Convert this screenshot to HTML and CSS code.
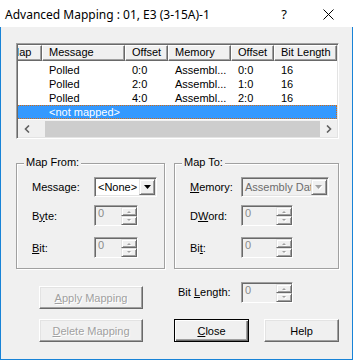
FILE: index.html
```html
<!DOCTYPE html>
<html>
<head>
<meta charset="utf-8">
<link rel="stylesheet" href="styles.css">
</head>
<body>
<div class="window">
  <div class="titlebar">
    <span class="title">Advanced Mapping : 01, E3 (3-15A)-1</span>
    <span class="tb-help">?</span>
    <span class="tb-close"><svg width="11" height="11" viewBox="0 0 11 11"><path d="M0.5 0.5L10.5 10.5M10.5 0.5L0.5 10.5" stroke="#000" stroke-width="1" fill="none"/></svg></span>
  </div>
  <div class="body">
    <div class="list">
      <div class="view">
        <div class="content">
          <div class="hdr">
            <div class="hc c-map">Map</div>
            <div class="hc c-msg">Message</div>
            <div class="hc c-off">Offset</div>
            <div class="hc c-mem">Memory</div>
            <div class="hc c-off2">Offset</div>
            <div class="hc c-bit">Bit Length</div>
          </div>
          <div class="row"><div class="cell c-map"></div><div class="cell c-msg">Polled</div><div class="cell c-off">0:0</div><div class="cell c-mem">Assembl...</div><div class="cell c-off2">0:0</div><div class="cell c-bit">16</div></div>
          <div class="row"><div class="cell c-map"></div><div class="cell c-msg">Polled</div><div class="cell c-off">2:0</div><div class="cell c-mem">Assembl...</div><div class="cell c-off2">1:0</div><div class="cell c-bit">16</div></div>
          <div class="row"><div class="cell c-map"></div><div class="cell c-msg">Polled</div><div class="cell c-off">4:0</div><div class="cell c-mem">Assembl...</div><div class="cell c-off2">2:0</div><div class="cell c-bit">16</div></div>
          <div class="row sel"><div class="cell c-map"></div><div class="cell c-msg">&lt;not mapped&gt;</div><div class="cell c-off"></div><div class="cell c-mem"></div><div class="cell c-off2"></div><div class="cell c-bit"></div></div>
        </div>
      </div>
      <div class="hscroll">
        <div class="sb-btn"><svg width="6" height="8" viewBox="0 0 6 8"><path d="M5 0.5L1.5 4L5 7.5" stroke="#606060" stroke-width="1.6" fill="none"/></svg></div>
        <div class="sb-track"><div class="sb-thumb"></div></div>
        <div class="sb-btn"><svg width="6" height="8" viewBox="0 0 6 8"><path d="M1 0.5L4.5 4L1 7.5" stroke="#606060" stroke-width="1.6" fill="none"/></svg></div>
      </div>
    </div>

    <div class="groups">
      <div class="group group-from">
        <span class="legend">Map From:</span>
        <div class="field">
          <span class="lbl lbl-from">Message:</span>
          <div class="combo combo-from">
            <span class="combo-text">&lt;None&gt;</span>
            <span class="combo-btn"><svg width="7" height="4" viewBox="0 0 7 4"><path d="M0 0H7L3.5 4Z" fill="#000"/></svg></span>
          </div>
        </div>
        <div class="field f2">
          <span class="lbl lbl-from">B<u>y</u>te:</span>
          <div class="spin spin-from">
            <span class="spin-edit">0</span>
            <span class="spin-btns">
              <span class="sbtn"><svg width="6" height="4" viewBox="0 0 6 4"><path d="M1 3L3 1L5 3Z" fill="#fff" transform="translate(1,1)"/><path d="M1 3L3 1L5 3Z" fill="#a0a0a0"/></svg></span>
              <span class="sbtn"><svg width="6" height="4" viewBox="0 0 6 4"><path d="M1 0L5 0L3 2Z" fill="#fff" transform="translate(1,1)"/><path d="M1 0L5 0L3 2Z" fill="#a0a0a0"/></svg></span>
            </span>
          </div>
        </div>
        <div class="field f3">
          <span class="lbl lbl-from"><u>B</u>it:</span>
          <div class="spin spin-from">
            <span class="spin-edit">0</span>
            <span class="spin-btns">
              <span class="sbtn"><svg width="6" height="4" viewBox="0 0 6 4"><path d="M1 3L3 1L5 3Z" fill="#fff" transform="translate(1,1)"/><path d="M1 3L3 1L5 3Z" fill="#a0a0a0"/></svg></span>
              <span class="sbtn"><svg width="6" height="4" viewBox="0 0 6 4"><path d="M1 0L5 0L3 2Z" fill="#fff" transform="translate(1,1)"/><path d="M1 0L5 0L3 2Z" fill="#a0a0a0"/></svg></span>
            </span>
          </div>
        </div>
      </div>

      <div class="group group-to">
        <span class="legend">Map To:</span>
        <div class="field">
          <span class="lbl lbl-to"><u>M</u>emory:</span>
          <div class="combo combo-to disabled">
            <span class="combo-text">Assembly Data</span>
            <span class="combo-btn"><svg width="8" height="5" viewBox="0 0 8 5"><path d="M1 1H8L4.5 5Z" fill="#fff"/><path d="M0 0H7L3.5 4Z" fill="#a0a0a0"/></svg></span>
          </div>
        </div>
        <div class="field f2">
          <span class="lbl lbl-to">D<u>W</u>ord:</span>
          <div class="spin spin-to">
            <span class="spin-edit">0</span>
            <span class="spin-btns">
              <span class="sbtn"><svg width="6" height="4" viewBox="0 0 6 4"><path d="M1 3L3 1L5 3Z" fill="#fff" transform="translate(1,1)"/><path d="M1 3L3 1L5 3Z" fill="#a0a0a0"/></svg></span>
              <span class="sbtn"><svg width="6" height="4" viewBox="0 0 6 4"><path d="M1 0L5 0L3 2Z" fill="#fff" transform="translate(1,1)"/><path d="M1 0L5 0L3 2Z" fill="#a0a0a0"/></svg></span>
            </span>
          </div>
        </div>
        <div class="field f3">
          <span class="lbl lbl-to">Bi<u>t</u>:</span>
          <div class="spin spin-to">
            <span class="spin-edit">0</span>
            <span class="spin-btns">
              <span class="sbtn"><svg width="6" height="4" viewBox="0 0 6 4"><path d="M1 3L3 1L5 3Z" fill="#fff" transform="translate(1,1)"/><path d="M1 3L3 1L5 3Z" fill="#a0a0a0"/></svg></span>
              <span class="sbtn"><svg width="6" height="4" viewBox="0 0 6 4"><path d="M1 0L5 0L3 2Z" fill="#fff" transform="translate(1,1)"/><path d="M1 0L5 0L3 2Z" fill="#a0a0a0"/></svg></span>
            </span>
          </div>
        </div>
      </div>
    </div>

    <div class="brow brow1">
      <button class="btn btn-wide" disabled><u>A</u>pply Mapping</button>
      <span class="bl-label">Bit <u>L</u>ength:</span>
      <div class="spin spin-to">
        <span class="spin-edit">0</span>
        <span class="spin-btns">
          <span class="sbtn"><svg width="6" height="4" viewBox="0 0 6 4"><path d="M1 3L3 1L5 3Z" fill="#fff" transform="translate(1,1)"/><path d="M1 3L3 1L5 3Z" fill="#a0a0a0"/></svg></span>
          <span class="sbtn"><svg width="6" height="4" viewBox="0 0 6 4"><path d="M1 0L5 0L3 2Z" fill="#fff" transform="translate(1,1)"/><path d="M1 0L5 0L3 2Z" fill="#a0a0a0"/></svg></span>
        </span>
      </div>
    </div>
    <div class="brow brow2">
      <button class="btn btn-wide" disabled><u>D</u>elete Mapping</button>
      <button class="btn btn-std btn-default"><u>C</u>lose</button>
      <button class="btn btn-std btn-help">Help</button>
    </div>
  </div>
</div>
</body>
</html>
```

FILE: styles.css
```css
* { box-sizing: border-box; }
html, body { margin: 0; padding: 0; }
body {
  width: 353px;
  height: 360px;
  overflow: hidden;
  background: #fff;
  font-family: "Liberation Sans", Arial, sans-serif;
  font-size: 11px;
  color: #000;
}
.window {
  width: 353px;
  height: 360px;
  display: flex;
  flex-direction: column;
}
.titlebar {
  height: 27px;
  flex: none;
  display: flex;
  align-items: center;
  background: #fff;
  font-family: "Noto Sans", "Open Sans", sans-serif;
  font-size: 12px;
}
.title { flex: 1; padding-left: 5px; padding-top: 1px; white-space: nowrap; }
.tb-help {
  width: 46px;
  text-align: center;
  font-size: 13px;
  padding-top: 1px;
}
.tb-close {
  width: 46px;
  padding-right: 3px;
  display: flex;
  justify-content: center;
  align-items: center;
  padding-top: 1px;
}
.tb-close svg { display: block; }

.body {
  flex: 1;
  background: #f0f0f0;
  border: 1px solid #1883d7;
  border-top: 0;
  padding-left: 15px;
}

/* list view */
.list {
  margin-top: 16px;
  width: 323px;
  height: 96px;
  border: 1px solid;
  border-color: #a0a0a0 #fff #fff #a0a0a0;
  box-shadow: inset 1px 1px 0 #696969, inset -1px -1px 0 #e3e3e3;
  padding: 1px;
  background: #fff;
  display: flex;
  flex-direction: column;
}
.view {
  height: 74px;
  overflow: hidden;
  background: #fff;
}
.content { margin-left: -15px; width: 334px; }
.hdr {
  display: flex;
  height: 16px;
  margin-bottom: 2px;
  background: #f0f0f0;
}
.hc {
  height: 16px;
  border: 1px solid;
  border-color: #fff #696969 #696969 #fff;
  box-shadow: inset -1px -1px 0 #a0a0a0;
  padding-left: 6px;
  line-height: 13px;
  white-space: nowrap;
  overflow: hidden;
}
.c-map { width: 39px; }
.c-msg { width: 83px; }
.c-off { width: 43px; }
.c-mem { width: 63px; }
.c-off2 { width: 43px; }
.c-bit { width: 63px; }
.row {
  display: flex;
  height: 14px;
  line-height: 14px;
}
.cell { padding-left: 7px; white-space: nowrap; overflow: hidden; }
.row.sel {
  background: #3399ff;
  color: #fff;
  outline: 1px dotted #d66a10;
  outline-offset: -1px;
}

.hscroll {
  height: 17px;
  margin-top: 1px;
  display: flex;
  background: #f0f0f0;
}
.sb-btn {
  width: 17px;
  display: flex;
  align-items: center;
  justify-content: center;
}
.sb-btn svg { display: block; }
.sb-track { flex: 1; display: flex; padding: 1px 0 0 10px; }
.sb-thumb { flex: 1; background: #cdcdcd; }

/* groups */
.groups {
  display: flex;
  gap: 9px;
  margin-top: 24px;
}
.group {
  position: relative;
  height: 106px;
  border: 1px solid #a0a0a0;
  box-shadow: inset 1px 1px 0 #fff, 1px 1px 0 #fff;
  padding: 13px 0 0 15px;
}
.group-from { width: 149px; }
.group-to { width: 165px; }
.legend {
  position: absolute;
  top: -8px;
  left: 7px;
  padding: 0 2px;
  line-height: 13px;
  background: #f0f0f0;
}
.field { display: flex; align-items: center; }
.f2 { margin-top: 8px; }
.f3 { margin-top: 11px; }
.lbl { line-height: 13px; padding-top: 1px; }
.lbl-from { width: 62px; }
.lbl-to { width: 51px; }

/* combo */
.combo {
  height: 20px;
  display: flex;
  border: 1px solid;
  border-color: #a0a0a0 #fff #fff #a0a0a0;
  box-shadow: inset 1px 1px 0 #696969, inset -1px -1px 0 #e3e3e3;
  padding: 1px;
  background: #fff;
}
.combo-from { width: 63px; }
.combo-to { width: 88px; }
.combo.disabled { background: #f0f0f0; color: #6d6d6d; }
.combo-text {
  flex: 1;
  overflow: hidden;
  white-space: nowrap;
  padding: 2px 0 0 2px;
  line-height: 13px;
}
.combo-btn {
  width: 16px;
  flex: none;
  display: flex;
  align-items: center;
  justify-content: center;
  background: #f0f0f0;
  border: 1px solid;
  border-color: #e3e3e3 #696969 #696969 #e3e3e3;
  box-shadow: inset 1px 1px 0 #fff, inset -1px -1px 0 #a0a0a0;
}
.combo-btn svg { display: block; }

/* spinner */
.spin {
  height: 21px;
  display: flex;
  border: 1px solid;
  border-color: #a0a0a0 #fff #fff #a0a0a0;
  box-shadow: inset 1px 1px 0 #696969;
  background: #f0f0f0;
}
.spin-from { width: 44px; }
.spin-to { width: 52px; }
.spin-edit {
  flex: 1;
  padding: 1px 0 0 3px;
  line-height: 13px;
  color: #8a8a8a;
}
.spin-btns {
  width: 16px;
  flex: none;
  display: flex;
  flex-direction: column;
  padding-top: 1px;
}
.sbtn {
  flex: 1;
  display: flex;
  align-items: center;
  justify-content: center;
  border: 1px solid;
  border-color: #e3e3e3 #696969 #696969 #e3e3e3;
  box-shadow: inset 1px 1px 0 #fff, inset -1px -1px 0 #a0a0a0;
}
.sbtn svg { display: block; }

/* bottom rows */
.brow { display: flex; align-items: flex-start; margin-left: 23px; }
.brow1 { margin-top: 13px; }
.brow2 { margin-top: 10px; }
.brow1 .btn { margin-top: 4px; }
.bl-label {
  width: 63px;
  margin-left: 35px;
  line-height: 21px;
}
.btn {
  height: 23px;
  padding: 0;
  margin: 0;
  font-family: "Liberation Sans", Arial, sans-serif;
  font-size: 11px;
  color: #000;
  background: #f0f0f0;
  border: 1px solid;
  border-color: #fff #696969 #696969 #fff;
  box-shadow: inset -1px -1px 0 #a0a0a0, inset 1px 1px 0 #e3e3e3;
  border-radius: 0;
}
.btn:disabled { color: #a0a0a0; text-shadow: 1px 1px 0 #fff; }
.btn-wide { width: 104px; }
.btn-std { width: 75px; }
.btn-default {
  margin-left: 31px;
  border-color: #000;
  box-shadow: inset 1px 1px 0 #fff, inset -1px -1px 0 #696969, inset -2px -2px 0 #a0a0a0;
}
.btn-help { margin-left: 15px; }
```
